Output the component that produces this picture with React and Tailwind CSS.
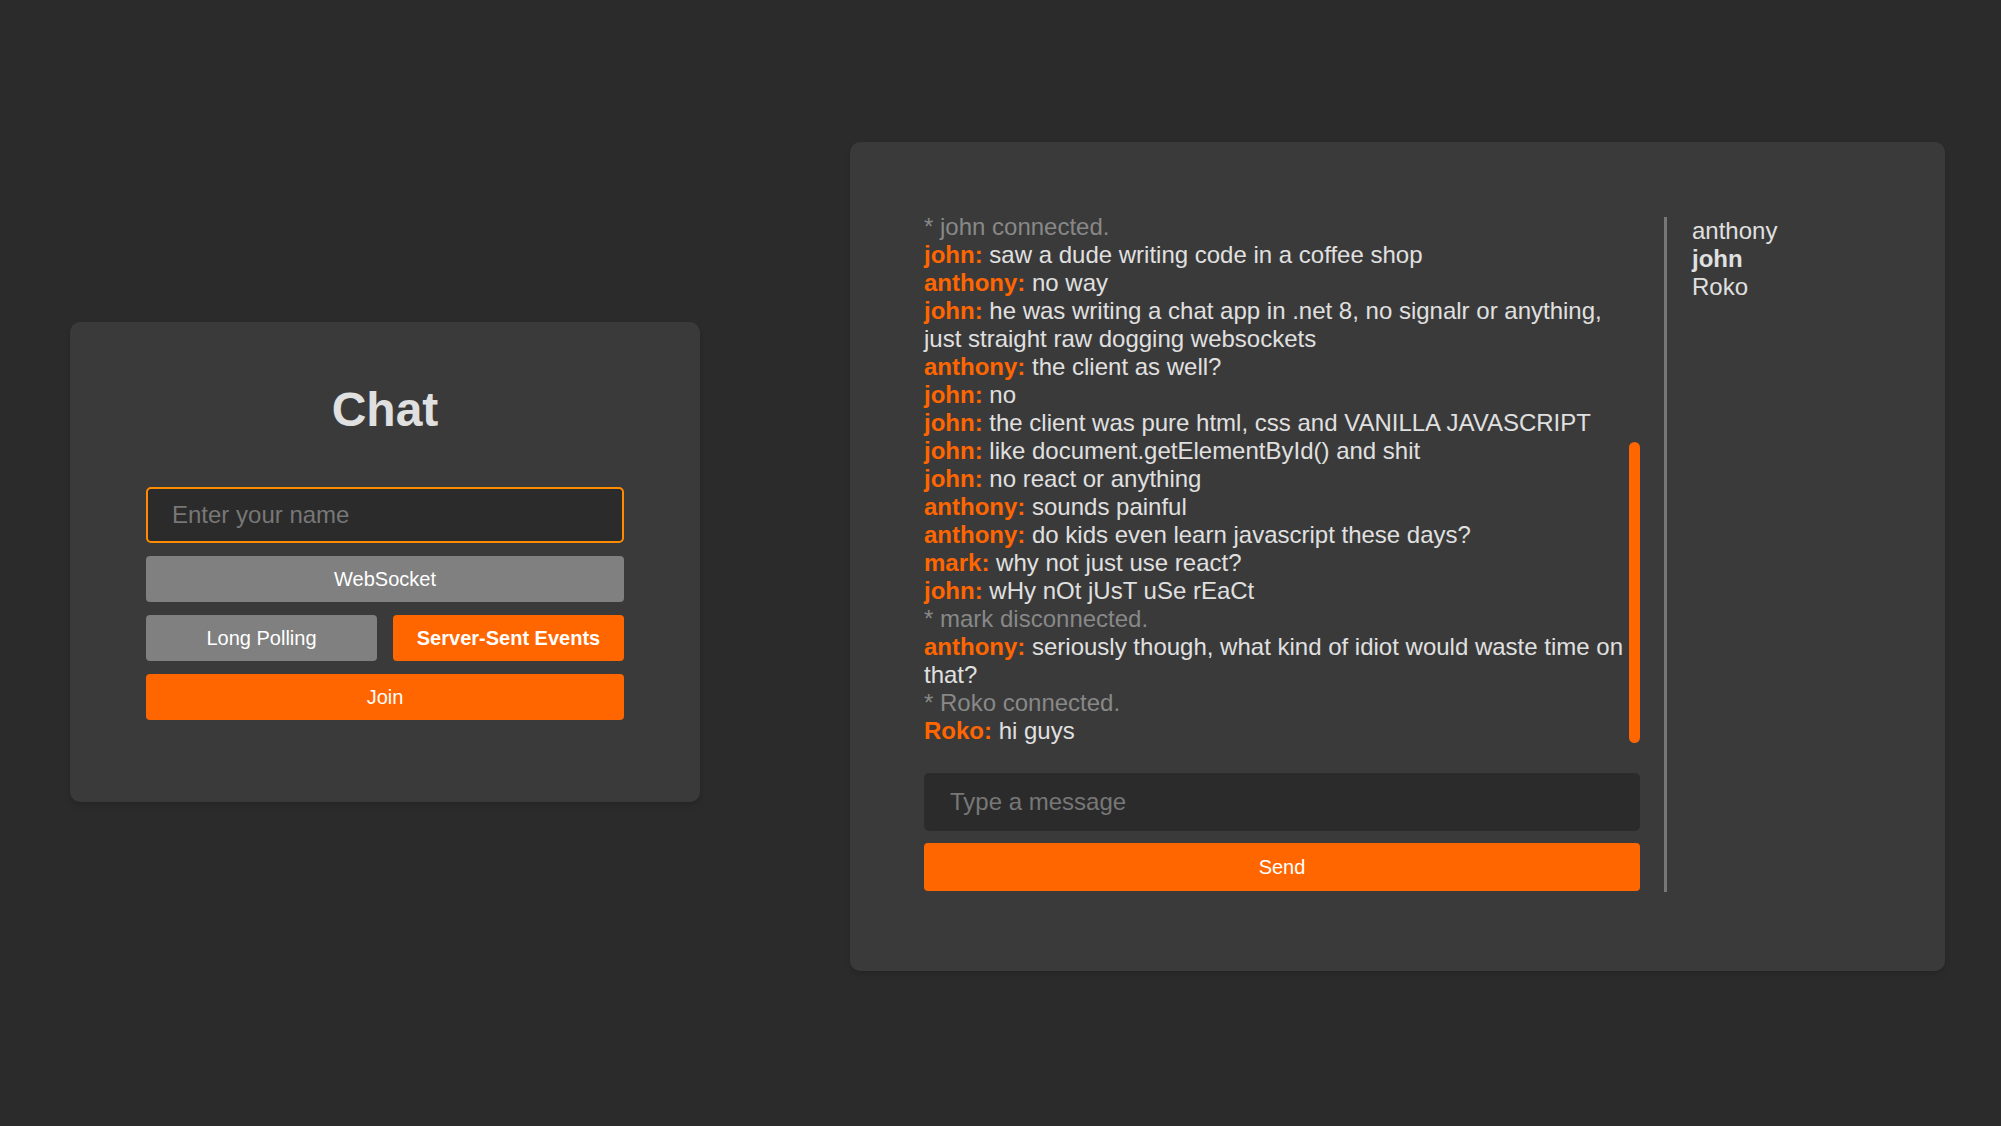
import React from 'react';

const messages = [
  { system: true, text: '* john connected.' },
  { user: 'john', text: 'saw a dude writing code in a coffee shop' },
  { user: 'anthony', text: 'no way' },
  { user: 'john', text: 'he was writing a chat app in .net 8, no signalr or anything, just straight raw dogging websockets' },
  { user: 'anthony', text: 'the client as well?' },
  { user: 'john', text: 'no' },
  { user: 'john', text: 'the client was pure html, css and VANILLA JAVASCRIPT' },
  { user: 'john', text: 'like document.getElementById() and shit' },
  { user: 'john', text: 'no react or anything' },
  { user: 'anthony', text: 'sounds painful' },
  { user: 'anthony', text: 'do kids even learn javascript these days?' },
  { user: 'mark', text: 'why not just use react?' },
  { user: 'john', text: 'wHy nOt jUsT uSe rEaCt' },
  { system: true, text: '* mark disconnected.' },
  { user: 'anthony', text: 'seriously though, what kind of idiot would waste time on that?' },
  { system: true, text: '* Roko connected.' },
  { user: 'Roko', text: 'hi guys' },
];

const users = ['anthony', 'john', 'Roko'];
const me = 'john';

const App = () => {
  return (
    <div
      className="min-h-[1126px] w-full bg-[#2b2b2b] flex items-start pl-[70px] gap-[150px]"
      style={{ fontFamily: '"Liberation Sans", Arial, sans-serif' }}
    >
      {/* Join card */}
      <div className="mt-[322px] w-[630px] h-[480px] bg-[#3a3a3a] rounded-[10px] shadow-md px-[76px] pt-[60px]">
        <h1 className="text-[48px] font-bold text-[#e0e0e0] text-center leading-[55px] mb-[50px]">Chat</h1>
        <div className="flex flex-col gap-[13px]">
          <input
            placeholder="Enter your name"
            className="h-[56px] w-full rounded-[5px] border-2 border-[#ff8c00] bg-[#2b2b2b] px-[24px] text-[24px] text-[#e0e0e0] placeholder:text-[#777] outline-none"
          />
          <button className="h-[46px] rounded-[4px] bg-[#808080] text-[20px] text-white">WebSocket</button>
          <div className="grid grid-cols-2 gap-4">
            <button className="h-[46px] rounded-[4px] bg-[#808080] text-[20px] text-white">Long Polling</button>
            <button className="h-[46px] rounded-[4px] bg-[#ff6600] text-[20px] font-bold text-white">Server-Sent Events</button>
          </div>
          <button className="h-[46px] rounded-[4px] bg-[#ff6600] text-[20px] text-white">Join</button>
        </div>
      </div>

      {/* Chat room card */}
      <div className="mt-[142px] w-[1095px] h-[829px] bg-[#3a3a3a] rounded-[10px] shadow-md pl-[74px] pt-[71px] flex">
        <div className="w-[716px] flex flex-col">
          <div className="flex h-[532px]">
            <div className="w-[705px] text-[24px] leading-[28px] text-[#e0e0e0]">
              {messages.map((m, i) =>
                m.system ? (
                  <div key={i} className="text-[#888]">{m.text}</div>
                ) : (
                  <div key={i}>
                    <span className="font-bold text-[#ff6600]">{m.user}:</span> {m.text}
                  </div>
                )
              )}
            </div>
            <div className="w-[11px] flex flex-col justify-end pb-[2px]">
              <div className="h-[301px] rounded-full bg-[#ff6600]"></div>
            </div>
          </div>
          <input
            placeholder="Type a message"
            className="mt-[28px] h-[58px] w-full rounded-[5px] bg-[#2b2b2b] px-[26px] text-[24px] text-[#e0e0e0] placeholder:text-[#777] outline-none"
          />
          <button className="mt-[12px] h-[48px] w-full rounded-[4px] bg-[#ff6600] text-[20px] text-white">Send</button>
        </div>

        <div className="ml-[24px] mt-[4px] h-[675px] w-[3px] bg-[#777]"></div>

        <div className="ml-[25px] mt-[4px] text-[24px] leading-[28px] text-[#e0e0e0]">
          {users.map((u) => (
            <div key={u} className={u === me ? 'font-bold' : ''}>{u}</div>
          ))}
        </div>
      </div>
    </div>
  );
};

export default App;
